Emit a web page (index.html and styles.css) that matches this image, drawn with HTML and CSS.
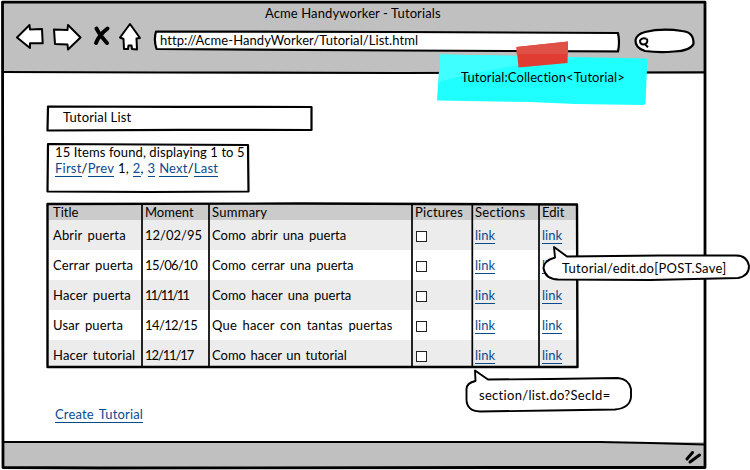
FILE: index.html
```
<!DOCTYPE html>
<html lang="es">
<head>
<meta charset="utf-8">
<title>Acme Handyworker - Tutorials</title>
<link rel="stylesheet" href="styles.css">
</head>
<body>
<div class="window">
  <header class="chrome">
    <div class="caption"><span class="t-cap">Acme Handyworker - Tutorials</span></div>
    <div class="toolbar">
      <svg class="nav" width="136" height="32" viewBox="12 20 136 32">
        <g fill="#fff" stroke="#000" stroke-width="2" stroke-linejoin="round">
          <path d="M17 37.5 L29.5 25 L30 29.5 L42 29 L42.700 43.300 L30 43.300 L30 48 Z"/>
          <path d="M54 29.500 L67.500 30 L68 25 L80.500 37.500 L68 49.500 L67.500 44.500 L55 44 Z"/>
          <path d="M130 24 L120 37.500 L123.500 39 L124 49 L128 49 L128.500 45.500 L131.500 45.500 L132 49 L137 49.500 L136.500 38.500 L140 38 Z"/>
        </g>
        <path d="M96.500 28.500 Q99 34 107 43 M107.500 28.500 Q99 35 96 43" fill="none" stroke="#000" stroke-width="4" stroke-linecap="round"/>
      </svg>
      <div class="address"><span class="t-url">http://Acme-HandyWorker/Tutorial/List.html</span></div>
      <div class="search">
        <svg width="12" height="14" viewBox="638 35 12 14"><path d="M646.500 38.800 Q642 37 640 40.500 Q640 44.500 643.500 44.500 Q648.500 44 647 38.800 M645 44.200 L648 47.200" fill="none" stroke="#000" stroke-width="2"/></svg>
      </div>
    </div>
  </header>
  <main class="page">
    <div class="box heading"><span class="t-list">Tutorial List</span></div>
    <div class="box pager">
      <div class="t-found">15 Items found, displaying 1 to 5</div>
      <div class="t-pages"><a>First</a>/<a>Prev</a> 1, <a>2</a>, <a>3</a> <a>Next</a>/<a>Last</a></div>
    </div>
    <div class="table">
      <div class="row head"><span>Title</span><span>Moment</span><span class="t-wide">Summary</span><span class="t-wide">Pictures</span><span class="t-wide">Sections</span><span>Edit</span></div>
      <div class="row"><span class="name">Abrir puerta</span><span>12/02/95</span><span class="text">Como abrir una puerta</span><span><i class="check"></i></span><span><a>link</a></span><span><a>link</a></span></div>
      <div class="row"><span class="name">Cerrar puerta</span><span class="d-slim">15/06/10</span><span class="text">Como cerrar una puerta</span><span><i class="check"></i></span><span><a>link</a></span><span><a>link</a></span></div>
      <div class="row"><span class="name">Hacer puerta</span><span class="d-ones">11/11/11</span><span class="text">Como hacer una puerta</span><span><i class="check"></i></span><span><a>link</a></span><span><a>link</a></span></div>
      <div class="row"><span class="name">Usar puerta</span><span class="d-slim">14/12/15</span><span class="text loose">Que hacer con tantas puertas</span><span><i class="check"></i></span><span><a>link</a></span><span><a>link</a></span></div>
      <div class="row"><span class="name">Hacer tutorial</span><span class="d-few">12/11/17</span><span class="text tight">Como hacer un tutorial</span><span><i class="check"></i></span><span><a>link</a></span><span><a>link</a></span></div>
    </div>
    <a class="create">Create Tutorial</a>
  </main>
  <footer class="status"></footer>
</div>

<svg class="ink" width="750" height="470" viewBox="0 0 750 470">
  <g fill="none" stroke="#000" stroke-width="2.2" stroke-linejoin="round">
    <path stroke-width="2.8" d="M2.500 2.200 L350 2.200 L705 2.200 L705 467.500 L500 467.500 L100 468 L3 467.500 Z"/>
    <path d="M3 72 L160 72.500 L400 73 L705 72.300 M3 442 L200 442 L600 442 L650 443 L705 444.500"/>
    <path d="M156 31.500 Q153.500 40 156.500 49 L400 50.500 L618 51.500 Q620 42 618 33 L400 32 Z"/>
    <path d="M645 32 Q662 28 682 31 Q694 32 693.500 44 Q690 51 674 51.500 Q660 53 645 51 Q635 48 635.500 40 Q637 34 645 32 Z"/>
    <path d="M48 106.500 L180 106.800 L311.500 107 L311.500 130 L180 129.800 L47.500 130.500 Z"/>
    <path d="M48 144 L248 145 L248.500 191.500 L150 192 L47.500 191.500 Z"/>
    <path stroke-width="2.400" d="M47.500 204 L300 203.500 L577 204.500 L577.500 367 L47.500 367 Z"/>
    <path stroke-width="1.700" d="M142 204 V367 M209 204 V367 M412 204 V367 M472.300 204 V367 M539 204 V367"/>
    <path stroke-linecap="round" stroke-width="3" d="M687 459 L692.500 452.500 M690 462 L699.500 455"/>
  </g>
  <path d="M440 54.500 L520 56 L647.500 58.500 L646.500 80 L645.500 103.500 L644 105 L575 104 L530 102 L437 100.500 L438.500 78 Z" fill="#20ffff"/>
  <path d="M440 54.500 L520 56 L580 57.500 Q500 65 439 82 Z" fill="#40ffff"/>
  <path d="M516.500 47 L568 41.500 L567.500 63 L518.500 67.500 Z" fill="#e03c32"/>
  <path d="M516.500 47 L568 41.500 L568 54 L516.500 54 Z" fill="#df5147"/>
  <g fill="#fff" stroke="#000" stroke-width="1.900" stroke-linejoin="round">
    <path d="M555 257.500 Q543.500 261 543.500 268 Q545 279 558 279.500 L650 280 L738 278 Q749 276 749 266 Q747 255 735 255.500 L660 255.500 L567 256.500 L554 247 Z"/>
    <path d="M475.500 381 Q466.500 383 466.500 389 L466.500 400 Q467 411 480 411.500 L550 410.500 L615 409.500 Q630 408 631 397 L631 389 Q629 379 618 378 L550 379 L488 379.500 L475 370.500 Z"/>
  </g>
</svg>
<div class="note n-collection">Tutorial:Collection&lt;Tutorial&gt;</div>
<div class="note n-save">Tutorial/edit.do[POST.Save]</div>
<div class="note n-section">section/list.do?SecId=</div>
</body>
</html>
```
FILE: styles.css
```
* { box-sizing: border-box; }
body { margin: 0; width: 750px; height: 470px; overflow: hidden; background: #fff; font: 13px/16px Lato, "Liberation Sans", sans-serif; font-variant-ligatures: none; color: #000; white-space: nowrap; position: relative; }
a { color: #074b8f; border-bottom: 1px solid #074b8f; display: inline-block; line-height: 15px; }
.window { margin-left: 3px; width: 702px; height: 468px; padding-top: 2px; display: flex; flex-direction: column; }
.chrome { height: 71px; background: #c0c0c0; }
.caption { height: 18px; padding: 3px 0 0 262px; }
.t-cap { letter-spacing: .11px; }
.toolbar { display: flex; align-items: flex-start; padding-left: 9px; }
.nav { flex: none; }
.address { margin: 12px 0 0 7px; width: 463px; height: 18px; background: #fff; padding: 0 0 0 5px; border-radius: 3px; }
.t-url { letter-spacing: .07px; }
.search { margin: 11px 0 0 18px; width: 57px; height: 20px; border-radius: 12px; background: #fff; padding: 4px 0 0 2px; display: flex; }
.page { flex: 1; display: flex; flex-direction: column; align-items: flex-start; padding: 33px 0 0 44px; }
.heading { height: 24px; width: 265px; padding: 3px 0 0 16px; }
.t-list { letter-spacing: .15px; }
.pager { margin-top: 14px; width: 202px; height: 48px; padding: 0 0 0 8px; }
.t-found { letter-spacing: .1px; }
.t-pages { letter-spacing: .22px; word-spacing: .3px; }
.table { margin-top: 12px; width: 530px; }
.row { display: grid; grid-template-columns: 95px 67px 203px 60px 67px 38px; height: 30px; line-height: 30px; }
.row:nth-child(even) { background: #ececec; }
.row > span { padding-left: 3px; }
.row > span:first-child { padding-left: 6px; }
.row.head { height: 16px; line-height: 17px; background: #cbcbcb; }
.row:last-child { height: 27px; }
.t-wide { letter-spacing: .27px; }
.name { letter-spacing: .15px; word-spacing: 2px; }
.text { word-spacing: 2px; }
.loose { letter-spacing: .18px; }
.tight { word-spacing: 1.3px; }
.d-slim { letter-spacing: -.6px; }
.d-ones { letter-spacing: -1.7px; }
.d-few { letter-spacing: -1.1px; }
.check { display: inline-block; width: 11px; height: 11px; border: 1px solid #222; background: #fff; margin-left: 1px; vertical-align: -2px; }
.create { margin: 40px 0 0 8px; letter-spacing: .15px; word-spacing: 2px; }
.status { height: 26px; background: #c0c0c0; }
.ink { position: absolute; left: 0; top: 0; }
.note { position: absolute; }
.n-collection { left: 461px; top: 69px; letter-spacing: .07px; }
.n-save { left: 562px; top: 260px; letter-spacing: .27px; }
.n-section { left: 479px; top: 387px; letter-spacing: .3px; }
```
